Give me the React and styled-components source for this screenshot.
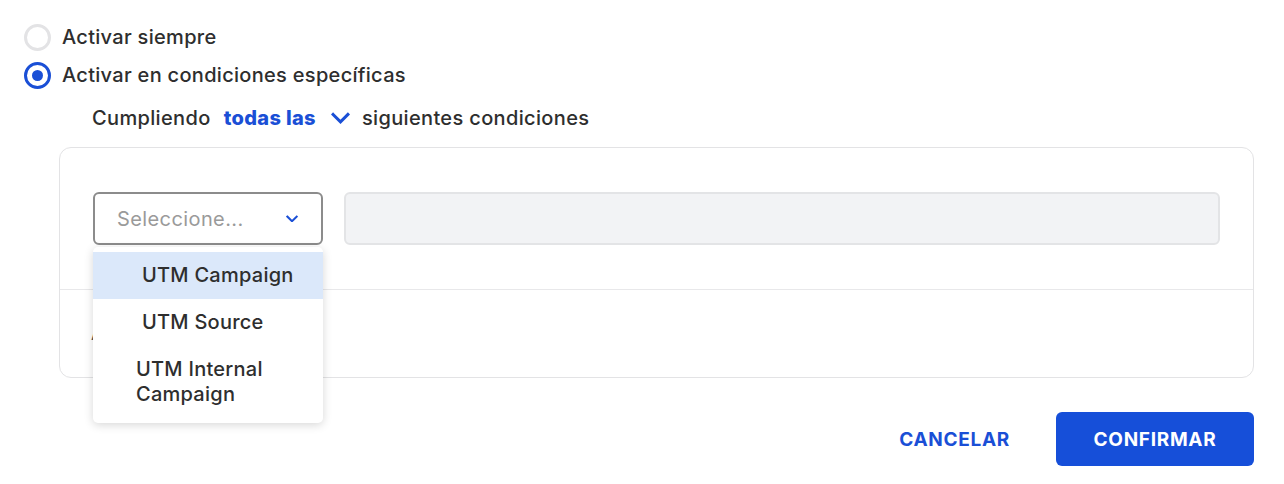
import React from 'react';
import styled, { createGlobalStyle } from 'styled-components';

const GlobalStyle = createGlobalStyle`
  body {
    margin: 0;
    background: #fff;
    font-family: Inter, "Open Sans", sans-serif;
    color: #2e2e2e;
  }
`;

const options = ['UTM Campaign', 'UTM Source', 'UTM Internal Campaign'];

function Chevron({ size = 12, stroke = 2 }) {
    return (
        <svg width={size} height={size * 0.65} viewBox="0 0 18 11" fill="none">
            <path d="M2 2l7 7 7-7" stroke="#1a4fd6" strokeWidth={stroke * 18 / size} strokeLinecap="square" />
        </svg>
    );
}

function App() {
    return (
        <Page>
            <GlobalStyle />
            <RadioRow>
                <Radio />
                <RadioLabel>Activar siempre</RadioLabel>
            </RadioRow>
            <RadioRow>
                <Radio checked />
                <RadioLabel>Activar en condiciones específicas</RadioLabel>
            </RadioRow>
            <MatchLine>
                Cumpliendo
                <MatchPick>
                    todas las
                    <Chevron size={19} stroke={3} />
                </MatchPick>
                siguientes condiciones
            </MatchLine>
            <Card>
                <ConditionRow>
                    <SelectWrap>
                        <Select>
                            <Placeholder>Seleccione...</Placeholder>
                            <Chevron size={12} stroke={2} />
                        </Select>
                        <Menu>
                            {options.map((opt, i) => (
                                <MenuItem key={i} active={i === 0} wrapped={i === 2}>{opt}</MenuItem>
                            ))}
                        </Menu>
                    </SelectWrap>
                    <ValueInput />
                </ConditionRow>
                <CardFooter>
                    <AddLink>Agregar</AddLink>
                </CardFooter>
            </Card>
            <Actions>
                <TextButton>CANCELAR</TextButton>
                <PrimaryButton>CONFIRMAR</PrimaryButton>
            </Actions>
        </Page>
    );
}

export default App;

const Page = styled.div`
  width: 1284px;
  height: 484px;
  box-sizing: border-box;
  padding: 18px 30px 0 24px;
`;

const RadioRow = styled.div`
  display: flex;
  align-items: center;
  height: 38px;
`;

const Radio = styled.span`
  width: 27px;
  height: 27px;
  box-sizing: border-box;
  border-radius: 50%;
  border: 3px solid ${({ checked }) => (checked ? '#1a4fd6' : '#e3e3e5')};
  display: flex;
  align-items: center;
  justify-content: center;
  margin-right: 11px;
  &::after {
    content: '';
    display: ${({ checked }) => (checked ? 'block' : 'none')};
    width: 11px;
    height: 11px;
    border-radius: 50%;
    background: #1a4fd6;
  }
`;

const RadioLabel = styled.span`
  font-size: 20px;
  font-weight: 500;
  letter-spacing: 0.3px;
`;

const MatchLine = styled.div`
  display: flex;
  align-items: center;
  height: 44px;
  margin: 2px 0 0 68px;
  font-size: 20px;
  font-weight: 500;
  letter-spacing: 0.35px;
`;

const MatchPick = styled.span`
  display: flex;
  align-items: center;
  gap: 15px;
  margin: 0 12px 0 13px;
  color: #1a4fd6;
  font-weight: 800;
`;

const Card = styled.div`
  margin: 7px 0 0 35px;
  border: 1px solid #e3e3e5;
  border-radius: 12px;
  height: 231px;
  box-sizing: border-box;
  display: flex;
  flex-direction: column;
`;

const ConditionRow = styled.div`
  display: flex;
  gap: 21px;
  padding: 44px 33px 0 33px;
  height: 142px;
  box-sizing: border-box;
  border-bottom: 1px solid #e8e8ea;
`;

const SelectWrap = styled.div`
  position: relative;
  width: 230px;
  flex: none;
`;

const Select = styled.div`
  height: 53px;
  box-sizing: border-box;
  border: 2px solid #8c8c8c;
  border-radius: 6px;
  display: flex;
  align-items: center;
  justify-content: space-between;
  padding: 0 23px 0 22px;
`;

const Placeholder = styled.span`
  color: #9a9a9a;
  font-size: 20px;
  letter-spacing: 0.4px;
`;

const Menu = styled.ul`
  position: absolute;
  top: 55px;
  left: 0;
  width: 230px;
  height: 176px;
  margin: 0;
  padding: 5px 0 0;
  box-sizing: border-box;
  list-style: none;
  background: #fff;
  border-radius: 5px;
  box-shadow: 0 2px 10px rgba(0, 0, 0, 0.16);
  z-index: 2;
`;

const MenuItem = styled.li`
  height: ${({ wrapped }) => (wrapped ? 'auto' : '47px')};
  display: flex;
  align-items: center;
  padding: ${({ wrapped }) => (wrapped ? '11px 40px 0 43px' : '0 0 0 49px')};
  background: ${({ active }) => (active ? '#dbe8fa' : 'transparent')};
  font-size: 20px;
  font-weight: 500;
  letter-spacing: 0.25px;
  line-height: 25px;
`;

const ValueInput = styled.div`
  flex: 1;
  height: 53px;
  box-sizing: border-box;
  background: #f2f3f5;
  border: 2px solid #e3e4e6;
  border-radius: 6px;
`;

const CardFooter = styled.div`
  flex: 1;
  display: flex;
  align-items: center;
  padding-left: 31px;
`;

const AddLink = styled.span`
  font-size: 18px;
  font-weight: 500;
  color: #555;
`;

const Actions = styled.div`
  display: flex;
  justify-content: flex-end;
  align-items: center;
  gap: 24px;
  margin-top: 34px;
`;

const TextButton = styled.button`
  border: none;
  background: none;
  color: #1a4fd6;
  font-family: inherit;
  font-size: 19px;
  font-weight: 700;
  letter-spacing: 0.7px;
  padding: 0 22px 0 0;
  cursor: pointer;
`;

const PrimaryButton = styled.button`
  width: 198px;
  height: 54px;
  border: none;
  border-radius: 6px;
  background: #164fd9;
  color: #fff;
  font-family: inherit;
  font-size: 19px;
  font-weight: 700;
  letter-spacing: 0.7px;
  cursor: pointer;
`;
